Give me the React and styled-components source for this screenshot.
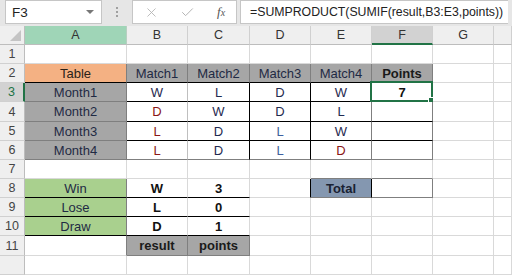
import React from 'react'
import styled, { createGlobalStyle } from 'styled-components'
import { X, Check } from 'lucide-react'

const GlobalStyle = createGlobalStyle`
  body {
    margin: 0;
    font-family: "Liberation Sans", Arial, sans-serif;
    overflow: hidden;
  }
`

const Window = styled.div`
  width: 512px;
  height: 277px;
  background: #e6e6e6;
  display: flex;
  flex-direction: column;
  overflow: hidden;
`

const FormulaBar = styled.div`
  height: 41px;
  display: flex;
  align-items: center;
  padding: 0 4px 2px 5px;
  box-sizing: border-box;
`

const NameBox = styled.div`
  width: 97px;
  height: 24px;
  box-sizing: border-box;
  background: #fff;
  border: 1px solid #c6c6c6;
  display: flex;
  align-items: center;
  justify-content: space-between;
  padding: 0 7px 0 6px;
  font-size: 13.5px;
  color: #222;
`

const Caret = styled.span`
  width: 0;
  height: 0;
  border-left: 4px solid transparent;
  border-right: 4px solid transparent;
  border-top: 4px solid #777;
`

const Grip = styled.div`
  width: 30px;
  display: flex;
  flex-direction: column;
  align-items: center;
  gap: 2px;
  span {
    width: 2px;
    height: 2px;
    background: #a0a0a0;
  }
`

const FxBox = styled.div`
  width: 105px;
  height: 24px;
  box-sizing: border-box;
  background: #fff;
  border: 1px solid #c6c6c6;
  display: flex;
  align-items: center;
  justify-content: space-around;
  color: #b4b4b4;
`

const Fx = styled.span`
  font-family: "Liberation Serif", "Times New Roman", serif;
  font-style: italic;
  font-size: 13px;
  color: #555;
  sub {
    font-size: 10px;
    vertical-align: baseline;
  }
`

const FormulaInput = styled.div`
  flex: 1;
  height: 24px;
  margin-left: 3px;
  box-sizing: border-box;
  background: #fff;
  border: 1px solid #c6c6c6;
  border-right: none;
  display: flex;
  align-items: center;
  padding-left: 9px;
  font-size: 12.3px;
  color: #222;
  white-space: nowrap;
`

const Sheet = styled.div`
  flex: 1;
  display: grid;
  grid-template-columns: 25px 102px 61px 62px 61px 61px 61px 61px 1fr;
  grid-template-rows: 19px 19px 19px 19px 20px 19px 19px 19px 19px 19px 19px 20px 19px 19px;
  background: #fff;
`

const Corner = styled.div`
  position: relative;
  background: #efefef;
  border-right: 1px solid #bdbdbd;
  border-bottom: 1px solid #bdbdbd;
  &::after {
    content: '';
    position: absolute;
    right: 3px;
    bottom: 3px;
    border-left: 11px solid transparent;
    border-bottom: 11px solid #c4c4c4;
  }
`

const ColHead = styled.div`
  background: ${p => (p.$active ? '#d2d2d2' : p.$tint ? '#9fd5b7' : '#efefef')};
  border-right: 1px solid ${p => (p.$tint ? '#b8cfc1' : '#d0d0d0')};
  border-bottom: ${p => (p.$active ? '2px solid #217346' : '1px solid #bdbdbd')};
  box-sizing: border-box;
  display: flex;
  align-items: center;
  justify-content: center;
  font-size: 12.5px;
  color: #333;
`

const RowHead = styled.div`
  background: ${p => (p.$active ? '#d2d2d2' : '#efefef')};
  border-right: ${p => (p.$active ? '2px solid #217346' : '1px solid #bdbdbd')};
  border-bottom: 1px solid #d0d0d0;
  box-sizing: border-box;
  display: flex;
  align-items: center;
  justify-content: center;
  font-size: 12.5px;
  color: ${p => (p.$active ? '#217346' : '#444')};
`

const Cell = styled.div`
  position: relative;
  box-sizing: border-box;
  background: ${p => p.$bg || '#fff'};
  border-right: 1px solid ${p => p.$br || '#d9d9d9'};
  border-bottom: 1px solid ${p => p.$bb || '#d9d9d9'};
  display: flex;
  align-items: center;
  justify-content: center;
  font-size: 13px;
  font-weight: ${p => (p.$b ? 700 : 400)};
  color: ${p => p.$c || '#1f2a44'};
  white-space: nowrap;
`

const Selection = styled.div`
  position: absolute;
  left: -2px;
  top: -2px;
  right: -1px;
  bottom: -1px;
  border: 2px solid #217346;
  pointer-events: none;
`

const Handle = styled.span`
  position: absolute;
  right: -4px;
  bottom: -4px;
  width: 5px;
  height: 5px;
  background: #217346;
  border: 1px solid #fff;
`

const K = '#000'
const G = '#7f7f7f'
const L = '#bfbfbf'
const NAVY = '#1f2a50'
const RED = '#8a1616'
const BLUE = '#3e5f9e'
const GRAY = '#a6a6a6'
const GREEN = '#a9d08e'

const cols = ['A', 'B', 'C', 'D', 'E', 'F', 'G', '']

const grid = {
  2: {
    A: { v: 'Table', bg: '#f4b183', bb: K, br: G, c: '#2a2218' },
    B: { v: 'Match1', bg: GRAY, bb: K, br: G },
    C: { v: 'Match2', bg: GRAY, bb: K, br: G },
    D: { v: 'Match3', bg: GRAY, bb: K, br: G },
    E: { v: 'Match4', bg: GRAY, bb: K, br: G },
    F: { v: 'Points', bg: GRAY, bb: K, br: G, b: true, c: '#1a1a1a' },
  },
  3: {
    A: { v: 'Month1', bg: GRAY, bb: G, br: G },
    B: { v: 'W', bb: K, br: L, c: NAVY },
    C: { v: 'L', bb: K, br: K, c: NAVY },
    D: { v: 'D', bb: K, br: K, c: NAVY },
    E: { v: 'W', bb: K, br: G, c: NAVY },
    F: { v: '7', bb: K, br: G, b: true, c: '#111', sel: true },
  },
  4: {
    A: { v: 'Month2', bg: GRAY, bb: G, br: G },
    B: { v: 'D', bb: K, br: L, c: RED },
    C: { v: 'W', bb: K, br: K, c: NAVY },
    D: { v: 'D', bb: K, br: K, c: NAVY },
    E: { v: 'L', bb: K, br: G, c: NAVY },
    F: { v: '', bb: K, br: G },
  },
  5: {
    A: { v: 'Month3', bg: GRAY, bb: G, br: G },
    B: { v: 'L', bb: K, br: L, c: RED },
    C: { v: 'D', bb: K, br: K, c: NAVY },
    D: { v: 'L', bb: K, br: K, c: BLUE },
    E: { v: 'W', bb: K, br: G, c: NAVY },
    F: { v: '', bb: K, br: G },
  },
  6: {
    A: { v: 'Month4', bg: GRAY, bb: G, br: G },
    B: { v: 'L', bb: G, br: L, c: RED },
    C: { v: 'D', bb: G, br: K, c: NAVY },
    D: { v: 'L', bb: G, br: K, c: BLUE },
    E: { v: 'D', bb: G, br: G, c: RED },
    F: { v: '', bb: G, br: G },
  },
  7: {
    E: { v: '', bb: G },
    F: { v: '', bb: G },
  },
  8: {
    A: { v: 'Win', bg: GREEN, bb: K, br: G },
    B: { v: 'W', bb: K, b: true, c: '#111' },
    C: { v: '3', bb: K, b: true, c: '#111' },
    D: { v: '', br: K },
    E: { v: 'Total', bg: '#8497b0', bb: G, br: K, b: true, c: '#1a2233' },
    F: { v: '', bb: G, br: G },
  },
  9: {
    A: { v: 'Lose', bg: GREEN, bb: K, br: G },
    B: { v: 'L', bb: K, b: true, c: '#111' },
    C: { v: '0', bb: K, b: true, c: '#111' },
  },
  10: {
    A: { v: 'Draw', bg: GREEN, bb: K, br: G },
    B: { v: 'D', bb: K, b: true, c: '#111' },
    C: { v: '1', bb: K, b: true, c: '#111' },
  },
  11: {
    A: { v: '', br: G },
    B: { v: 'result', bg: GRAY, bb: G, br: G, b: true, c: '#1a1a1a' },
    C: { v: 'points', bg: GRAY, bb: G, br: G, b: true, c: '#1a1a1a' },
  },
}

// row 12 only peeks in at the bottom edge, its number is out of view
const rows = Array.from({ length: 12 }, (_, i) => i + 1)

export default function App() {
  return (
    <Window>
      <GlobalStyle />
      <FormulaBar>
        <NameBox>
          F3
          <Caret />
        </NameBox>
        <Grip>
          <span />
          <span />
          <span />
        </Grip>
        <FxBox>
          <X size={15} strokeWidth={1.4} />
          <Check size={15} strokeWidth={1.6} />
          <Fx>
            f<sub>x</sub>
          </Fx>
        </FxBox>
        <FormulaInput>=SUMPRODUCT(SUMIF(result,B3:E3,points))</FormulaInput>
      </FormulaBar>
      <Sheet>
        <Corner />
        {cols.map(c => (
          <ColHead key={c || 'x'} $tint={c === 'A'} $active={c === 'F'}>
            {c}
          </ColHead>
        ))}
        {rows.map(r => (
          <React.Fragment key={r}>
            <RowHead $active={r === 3}>{r < 12 ? r : ''}</RowHead>
            {cols.map(c => {
              const d = (grid[r] && grid[r][c]) || {}
              return (
                <Cell key={c || 'x'} $bg={d.bg} $bb={d.bb} $br={d.br} $b={d.b} $c={d.c}>
                  {d.v}
                  {d.sel && (
                    <Selection>
                      <Handle />
                    </Selection>
                  )}
                </Cell>
              )
            })}
          </React.Fragment>
        ))}
      </Sheet>
    </Window>
  )
}
